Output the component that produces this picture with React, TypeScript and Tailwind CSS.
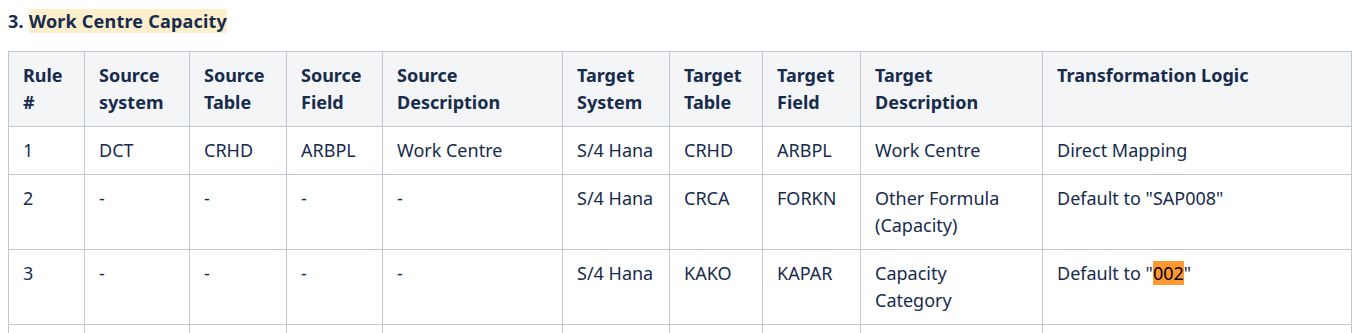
import React from 'react';

const cols = [76, 105, 97, 96, 180, 107, 93, 98, 182, 309];

const head = [
  'Rule #',
  'Source system',
  'Source Table',
  'Source Field',
  'Source Description',
  'Target System',
  'Target Table',
  'Target Field',
  'Target Description',
  'Transformation Logic',
];

const rows: React.ReactNode[][] = [
  ['1', 'DCT', 'CRHD', 'ARBPL', 'Work Centre', 'S/4 Hana', 'CRHD', 'ARBPL', 'Work Centre', 'Direct Mapping'],
  ['2', '-', '-', '-', '-', 'S/4 Hana', 'CRCA', 'FORKN', 'Other Formula (Capacity)', 'Default to "SAP008"'],
  [
    '3', '-', '-', '-', '-', 'S/4 Hana', 'KAKO', 'KAPAR', <>Capacity<br />Category</>,
    <>Default to "<span className="bg-[#ff9832] text-black">002</span>"</>,
  ],
];

export default function App() {
  return (
    <div className="bg-white min-h-screen px-2 pt-[8px] text-[#172b4d] font-['Noto_Sans',sans-serif] text-[18px] leading-[27px]">
      <h3 className="font-bold tracking-[0.2px]">
        3. <span className="bg-[#fdefcb]">Work Centre Capacity</span>
      </h3>
      <table className="mt-[16px] table-fixed border-collapse w-[1344px]">
        <colgroup>
          {cols.map((w, i) => (
            <col key={i} style={{ width: w }} />
          ))}
        </colgroup>
        <thead>
          <tr className="bg-[#f4f5f7]">
            {head.map((h) => (
              <th key={h} className="border border-[#c1c7d0] px-[14px] py-[10px] text-left align-top font-bold">
                {h}
              </th>
            ))}
          </tr>
        </thead>
        <tbody>
          {rows.map((r, i) => (
            <tr key={i}>
              {r.map((c, j) => (
                <td key={j} className="border border-[#c1c7d0] px-[14px] py-[10px] align-top">
                  {c}
                </td>
              ))}
            </tr>
          ))}
          <tr>
            {cols.map((_, j) => (
              <td key={j} className="h-[47px] border border-[#c1c7d0] px-[14px] py-[10px]" />
            ))}
          </tr>
        </tbody>
      </table>
    </div>
  );
}
